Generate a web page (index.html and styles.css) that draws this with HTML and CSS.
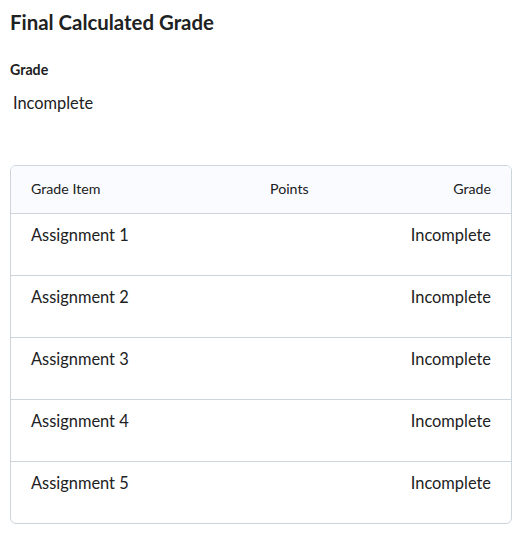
FILE: index.html
```html
<!DOCTYPE html>
<html>
<head>
<meta charset="utf-8">
<link rel="stylesheet" href="styles.css">
</head>
<body>
<div class="page">
  <h1 class="title">Final Calculated Grade</h1>
  <div class="label">Grade</div>
  <div class="value">Incomplete</div>
  <div class="table">
    <div class="row head">
      <div>Grade Item</div>
      <div>Points</div>
      <div class="right">Grade</div>
    </div>
    <div class="row"><div>Assignment 1</div><div></div><div class="right">Incomplete</div></div>
    <div class="row"><div>Assignment 2</div><div></div><div class="right">Incomplete</div></div>
    <div class="row"><div>Assignment 3</div><div></div><div class="right">Incomplete</div></div>
    <div class="row"><div>Assignment 4</div><div></div><div class="right">Incomplete</div></div>
    <div class="row"><div>Assignment 5</div><div></div><div class="right">Incomplete</div></div>
  </div>
</div>
</body>
</html>
```
FILE: styles.css
```css
html, body { margin: 0; padding: 0; background: #fff; }
body { font-family: Lato, "Open Sans", sans-serif; color: #202122; }
.page { padding: 10px 7px 0 10px; }
.title { margin: 0; font-size: 20.4px; line-height: 24px; font-weight: 700; }
.label { margin-top: 26px; font-size: 14.2px; line-height: 20px; font-weight: 700; }
.value { margin-top: 11px; margin-left: 3px; font-size: 16.4px; line-height: 24px; }
.table { margin-top: 50px; border: 1px solid #cdd5dc; border-radius: 6px; overflow: hidden; }
.row { display: grid; grid-template-columns: 239px 1fr auto; padding: 9px 20px 28px; font-size: 16.4px; line-height: 24px; border-top: 1px solid #cdd5dc; }
.row.head { border-top: 0; background: #f9fbff; font-size: 14.2px; line-height: 20px; padding: 13px 20px 14px; }
.right { text-align: right; }
```
